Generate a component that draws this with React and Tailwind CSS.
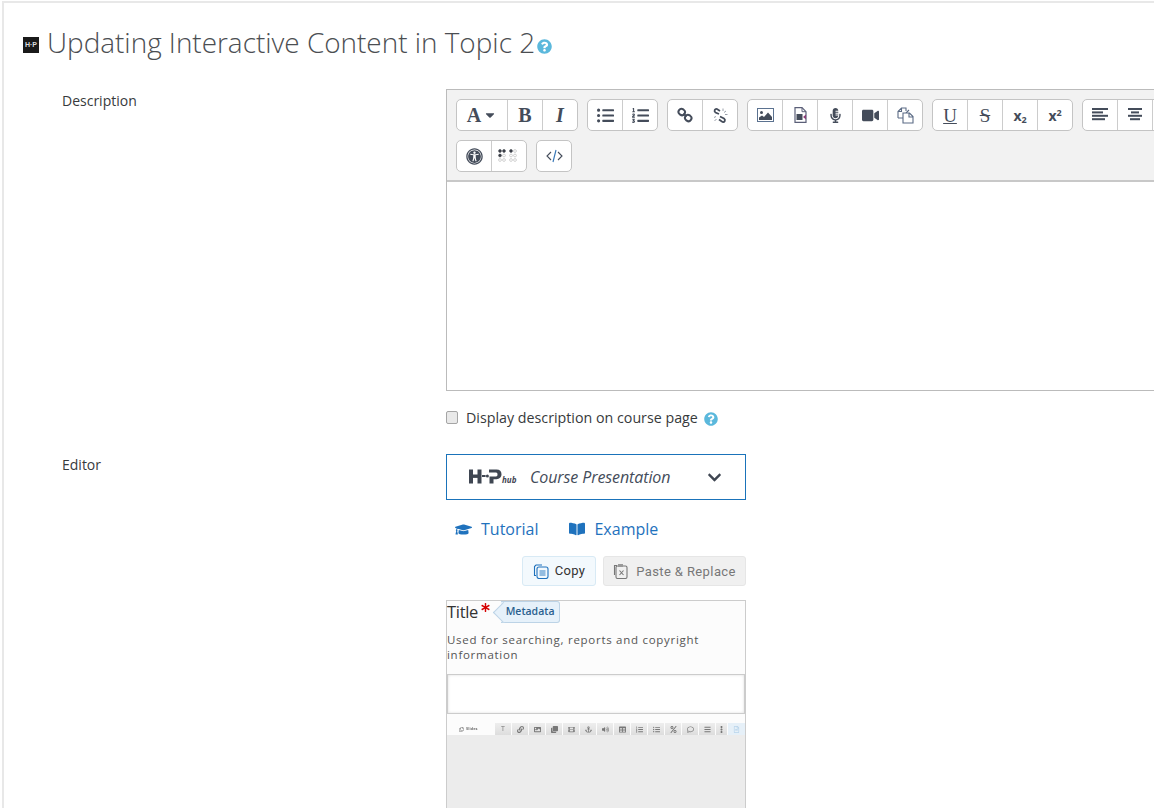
import React from "react";
import {
  FaListUl, FaListOl, FaLink, FaImage, FaAnchor, FaVolumeUp, FaFilm, FaEllipsisV, FaBars, FaPercent, FaClone,
  FaRegFileAlt, FaTable, FaRegComment, FaRegCopy,
  FaGraduationCap, FaBookOpen, FaChevronDown, FaQuestionCircle, FaAsterisk, FaCaretDown, FaUniversalAccess, FaMicrophoneAlt, FaVideo,
} from "react-icons/fa";

const ic = "text-[#444c5a]";

function Btn({ w = "w-[35px]", children, last }) {
  const width = last ? "w-[34px]" : w;
  return (
    <div className={`${width} h-full flex items-center justify-center ${last ? "" : "border-r border-[#ccc]"} ${ic}`}>
      {children}
    </div>
  );
}

function Group({ children }) {
  return (
    <div className="h-[32px] flex bg-white border border-[#c4c4c4] rounded-[5px] shrink-0">
      {children}
    </div>
  );
}

function Serif({ children, cls = "" }) {
  return <span className={`font-['Liberation_Serif',serif] text-[#444c5a] leading-none ${cls}`}>{children}</span>;
}

function Bars({ rows }) {
  return (
    <svg width="16" height="14" viewBox="0 0 16 14" fill="#444c5a">
      {rows.map(([x, w], i) => (
        <rect key={i} x={x} y={i * 3.4} width={w} height="2" />
      ))}
    </svg>
  );
}

function ChainIcon() {
  return (
    <svg width="16" height="16" viewBox="0 0 16 16" fill="none" stroke="#444c5a" strokeWidth="2">
      <rect x="1.500" y="2" width="6.500" height="6" rx="3" transform="rotate(35 4.700 5)" />
      <rect x="8" y="8" width="6.500" height="6" rx="3" transform="rotate(35 11.200 11)" />
      <path d="M6.500 6.500 9.500 9.500" />
    </svg>
  );
}

function BrokenChainIcon() {
  return (
    <svg width="17" height="17" viewBox="0 0 17 17" fill="none" stroke="#444c5a" strokeWidth="1.800">
      <path d="M7 7 3.500 5.500C1.500 4 3 1.500 5 2l3 2" />
      <path d="M8 9.500l4 2c2 1.500.5 4-1.500 3.500L7 12.500" />
      <path d="M11 1.500v2.500M14 4l-2 1.500M15.500 7.500H13M2 10.500l2-1M2.500 14l2-2" stroke="#9aa0aa" strokeWidth="1" />
    </svg>
  );
}

function PictureIcon() {
  return (
    <svg width="17" height="14" viewBox="0 0 17 14">
      <rect x="0.500" y="0.500" width="16" height="13" fill="#fff" stroke="#5b7290" />
      <rect x="1.500" y="1.500" width="14" height="11" fill="#fff" />
      <circle cx="4.500" cy="4.500" r="1.500" fill="#444c5a" />
      <path d="M2 12V9.500L5 7.500l2 1.500 4-4.500 4 4.500V12z" fill="#444c5a" />
    </svg>
  );
}

function VideoFileIcon() {
  return (
    <svg width="13" height="16" viewBox="0 0 13 16">
      <path d="M1 .700h7l4 4V15.300H1z" fill="#fff" stroke="#5b5f78" strokeWidth="1.200" />
      <path d="M8 .700v4h4" fill="none" stroke="#5b5f78" />
      <rect x="2.500" y="7" width="6" height="6" fill="#444c5a" />
      <path d="M9 10l3-2.500v5z" fill="#8a3f78" />
    </svg>
  );
}

function DocsIcon() {
  return (
    <svg width="17" height="17" viewBox="0 0 17 17" fill="none" stroke="#5b6b85" strokeWidth="1.100">
      <path d="M1 11V4.500L4.500 1H9v3M4.500 1v3.500H1M1 11h5" />
      <path d="M12 3 9 6" />
      <path d="M6 6h6.500L16 9.500V16H6zM12 6v4h4" fill="#fff" />
    </svg>
  );
}

function CodeIcon() {
  return (
    <svg width="17" height="14" viewBox="0 0 17 14" fill="none" stroke="#444c5a" strokeWidth="1.100">
      <path d="M5 3 1 7l4 4M12 3l4 4-4 4" />
      <path d="M10 1 7 13" stroke="#3878b8" />
    </svg>
  );
}

function Braille() {
  const dark = "#3c4048";
  const light = "#b5b5b5";
  const cell = (cx, on) =>
    [0, 1].flatMap((c) =>
      [0, 1, 2].map((r) => (
        <circle
          key={`${cx}-${c}-${r}`}
          cx={cx + c * 4}
          cy={2 + r * 4.500}
          r="1.400"
          fill={on[c][r] ? dark : "#fff"}
          stroke={on[c][r] ? dark : light}
          strokeWidth="0.600"
        />
      ))
    );
  return (
    <svg width="22" height="14" viewBox="0 0 22 14">
      {cell(2, [[1, 1, 0], [1, 0, 0]])}
      {cell(13, [[1, 0, 0], [0, 0, 0]])}
    </svg>
  );
}

function H5PLogo() {
  return (
    <svg width="34" height="15" viewBox="0 0 34 15" className="shrink-0">
      <g fill="#3f4652">
        <rect x="0" y="0.500" width="4" height="14" />
        <rect x="8.500" y="0.500" width="4" height="14" />
        <rect x="3" y="5.500" width="7" height="3.400" />
        <rect x="13" y="6" width="3.600" height="2" />
        <circle cx="18.400" cy="7" r="1.500" />
        <path d="M20 .5h7.500c3.300 0 5 2 5 4.800s-2 4.900-5 4.900h-3V14.500H20.500V7.500h6.500c1 0 1.500-.9 1.500-2s-.5-1.900-1.500-1.900H20z" />
      </g>
    </svg>
  );
}

function CopyDocsIcon() {
  return (
    <svg width="16" height="16" viewBox="0 0 16 16" fill="none" stroke="#1f72bd" strokeWidth="1.100">
      <path d="M3 12.500H1.500V3.500L3 2h6" />
      <rect x="4" y="4" width="11" height="11.500" rx="2" fill="#f3f9fd" />
      <path d="M6.500 8h6M6.500 10h6M6.500 12h6" strokeWidth="0.900" />
    </svg>
  );
}

function PasteIcon() {
  return (
    <svg width="15" height="16" viewBox="0 0 15 16" fill="none" stroke="#777" strokeWidth="1.100">
      <path d="M4 2.500H1.500V12" />
      <rect x="3" y="3" width="11" height="12.500" rx="1.500" fill="#f0f0f0" />
      <rect x="5" y="1" width="5" height="3" fill="#999" stroke="none" />
      <path d="M6.500 7.500l4 4.500M10.500 7.500l-4 4.500" />
    </svg>
  );
}

const miniBtns = [
  [null, 16], [FaLink, 16], [FaImage, 16], [FaClone, 16], [FaFilm, 16], [FaAnchor, 16], [FaVolumeUp, 16],
  [FaTable, 16], [FaListOl, 16], [FaListUl, 16], [FaPercent, 16], [FaRegComment, 16], [FaBars, 16], [FaEllipsisV, 11],
];

export default function App() {
  return (
    <div className="h-[808px] w-[1154px] overflow-hidden bg-white font-['Open_Sans',sans-serif] text-[#373a3c] text-[14px]">
      <div className="ml-[2px] mt-[1px] h-[820px] border-l-2 border-t-2 border-[#e8e8e8] pl-[19px]">
        <div className="flex items-center h-[40px] mt-[20px]">
          <div className="w-[16px] h-[16px] bg-[#1a1a1a] text-[#ddd] text-[7px] font-bold flex items-center justify-center font-['Liberation_Sans',sans-serif] shrink-0 mt-[4px]">
            H·P
          </div>
          <h1 className="ml-[8px] text-[27.9px] font-light leading-none text-[#4b4e52] whitespace-nowrap">
            Updating Interactive Content in Topic 2
          </h1>
          <FaQuestionCircle className="ml-[2px] mt-[7px] text-[15px] text-[#5bb8dc]" />
        </div>

        <div className="flex mt-[26px]">
          <div className="w-[424px] pl-[39px] shrink-0 pt-[2px] leading-[20px]">Description</div>
          <div className="w-[800px] shrink-0 -ml-[1px]">
            <div className="w-[800px] h-[302px] border border-[#bbb] border-r-0 flex flex-col">
              <div className="h-[92px] bg-[#f2f2f2] border-b-2 border-[#c8c8c8] pl-[9px] pt-[9px] flex flex-col gap-[9px] shrink-0">
                <div className="flex gap-[9px]">
                  <Group>
                    <Btn w="w-[51px]">
                      <Serif cls="font-bold text-[20px]">A</Serif>
                      <FaCaretDown className="text-[14px] ml-[2px]" />
                    </Btn>
                    <Btn><Serif cls="font-bold text-[20px]">B</Serif></Btn>
                    <Btn last><Serif cls="italic font-bold text-[20px]">I</Serif></Btn>
                  </Group>
                  <Group>
                    <Btn><FaListUl className="text-[17px]" /></Btn>
                    <Btn last><FaListOl className="text-[17px]" /></Btn>
                  </Group>
                  <Group>
                    <Btn><ChainIcon /></Btn>
                    <Btn last><BrokenChainIcon /></Btn>
                  </Group>
                  <Group>
                    <Btn><PictureIcon /></Btn>
                    <Btn><VideoFileIcon /></Btn>
                    <Btn><FaMicrophoneAlt className="text-[15px]" /></Btn>
                    <Btn><FaVideo className="text-[17px]" /></Btn>
                    <Btn last><DocsIcon /></Btn>
                  </Group>
                  <Group>
                    <Btn><Serif cls="text-[19px] underline">U</Serif></Btn>
                    <Btn><Serif cls="text-[19px] line-through">S</Serif></Btn>
                    <Btn><span className="font-bold text-[14px] text-[#444c5a]">x<sub className="text-[9px]">2</sub></span></Btn>
                    <Btn last><span className="font-bold text-[14px] text-[#444c5a]">x<sup className="text-[9px]">2</sup></span></Btn>
                  </Group>
                  <Group>
                    <Btn><Bars rows={[[0, 16], [0, 11], [0, 16], [0, 13]]} /></Btn>
                    <Btn><Bars rows={[[1, 14], [4, 8], [1, 14], [3, 10]]} /></Btn>
                    <Btn last />
                  </Group>
                </div>
                <div className="flex gap-[9px]">
                  <Group>
                    <Btn><FaUniversalAccess className="text-[17px]" /></Btn>
                    <Btn last><Braille /></Btn>
                  </Group>
                  <Group>
                    <Btn last><CodeIcon /></Btn>
                  </Group>
                </div>
              </div>
              <div className="flex-1 bg-white" />
            </div>

            <div className="flex items-center mt-[17px] h-[20px]">
              <span className="w-[12px] h-[13px] rounded-[2px] border border-[#a5a5a5] bg-[#e9e9e9] shrink-0 -mt-[1px]" />
              <span className="ml-[8px] whitespace-nowrap text-[14.25px]">Display description on course page</span>
              <FaQuestionCircle className="ml-[6px] text-[14px] mt-[2px] text-[#5bb8dc]" />
            </div>
          </div>
        </div>

        <div className="flex mt-[26px]">
          <div className="w-[424px] pl-[39px] shrink-0 leading-[20px] pt-[1px]">Editor</div>
          <div className="w-[300px] shrink-0 -ml-[1px]">
            <div className="h-[46px] border border-[#1a73ba] flex items-center pl-[22px] pr-[23px]">
              <div className="relative w-[48px] h-[16px] shrink-0">
                <H5PLogo />
                <span className="absolute left-[33px] top-[5px] text-[8px] italic font-bold text-[#3f4652]">hub</span>
              </div>
              <span className="ml-[13px] italic text-[16px] text-[#444c5a] whitespace-nowrap tracking-[-0.1px]">Course Presentation</span>
              <FaChevronDown className="ml-auto text-[15px] text-[#3f4652]" />
            </div>

            <div className="flex items-center mt-[17px] h-[24px] pl-[9px] text-[#1f72bd] text-[16px]">
              <FaGraduationCap className="text-[17px]" />
              <span className="ml-[9px]">Tutorial</span>
              <FaBookOpen className="ml-[31px] text-[16px]" />
              <span className="ml-[9px]">Example</span>
            </div>

            <div className="flex justify-end gap-[7px] mt-[15px] h-[30px] text-[13px] font-['Roboto',sans-serif]">
              <div className="w-[74px] flex items-center justify-center gap-[6px] rounded-[3px] border border-[#d8eaf5] bg-[#f3f9fd] text-[#333] tracking-[0.3px]">
                <CopyDocsIcon />
                Copy
              </div>
              <div className="w-[143px] flex items-center justify-center gap-[8px] rounded-[3px] border border-[#e6e6e6] bg-[#f0f0f0] text-[#777] tracking-[0.4px]">
                <PasteIcon />
                <span className="pt-[1px]">Paste &amp; Replace</span>
              </div>
            </div>

            <div className="mt-[14px] h-[220px] border border-[#ccc] bg-[#fcfcfc] flex flex-col">
              <div className="flex items-start h-[25px] shrink-0">
                <span className="text-[16.5px] leading-[22px] text-[#333] tracking-[-0.3px]" style={{ fontWeight: 500 }}>Title</span>
                <FaAsterisk className="ml-[3px] mt-[2px] text-[9px] text-[#d60000]" />
                <div className="relative ml-[11px] h-[22px] w-[59px] border border-l-0 border-[#bcd3e6] rounded-r-[3px] bg-[#e6f1fa] text-[#2a5f8f] text-[10.5px] font-semibold flex items-center justify-center shrink-0">
                  <span className="absolute -left-[5px] top-[3px] w-[15px] h-[15px] rotate-45 border-l border-b border-[#bcd3e6] bg-[#e6f1fa]" />
                  <span className="relative">Metadata</span>
                </div>
              </div>
              <p className="mt-[6px] text-[11.5px] leading-[15px] tracking-[0.72px] text-[#555] h-[42px] shrink-0">
                Used for searching, reports and copyright information
              </p>
              <div className="h-[40px] bg-white border border-[#ccc] shrink-0 shadow-[inset_0_0_3px_#ddd]" />
              <div className="h-[21px] shrink-0 flex items-end pl-[12px] relative blur-[0.5px]">
                <div className="flex items-center gap-[2px] text-[4px] font-bold text-[#777] h-[12px] w-[36px]">
                  <FaRegCopy className="text-[5px]" /> Slides
                </div>
                <div className="flex gap-[1px] h-[12px]">
                  {miniBtns.map(([I, w], i) => (
                    <div key={i} className={`h-full bg-gradient-to-b from-[#eeeeee] to-[#dddddd] flex items-center justify-center text-[#777] text-[7px] ${w === 16 ? "w-[16px]" : "w-[11px]"}`}>
                      {I ? <I /> : "T"}
                    </div>
                  ))}
                  <div className="w-[17px] h-full bg-[#e6f0f8] flex items-center justify-center text-[#b7d3ea]">
                    <FaRegFileAlt className="text-[7px]" />
                  </div>
                </div>
              </div>
              <div className="flex-1 bg-[#ececec]" />
            </div>
          </div>
        </div>
      </div>
    </div>
  );
}
